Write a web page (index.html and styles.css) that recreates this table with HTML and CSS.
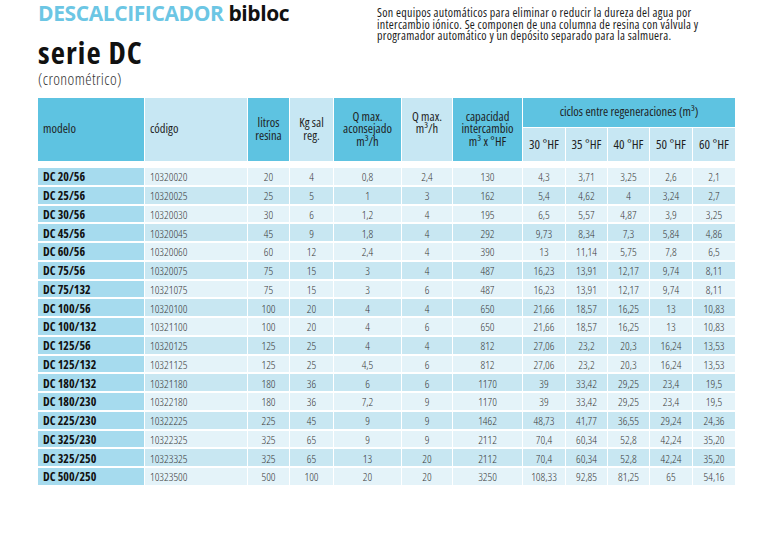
FILE: index.html
```html
<!DOCTYPE html>
<html lang="es">
<head>
<meta charset="utf-8">
<title>Descalcificador bibloc serie DC</title>
<link rel="stylesheet" href="styles.css">
</head>
<body>
<div class="page">
  <header class="top">
    <div class="titles">
      <h1 class="title"><span class="brand">DESCALCIFICADOR</span> bibloc</h1>
      <h2 class="serie">serie DC</h2>
      <p class="crono">(cronométrico)</p>
    </div>
    <p class="intro">Son equipos automáticos para eliminar o reducir la dureza del agua por intercambio iónico. Se componen de una columna de resina con válvula y programador automático y un depósito separado para la salmuera.</p>
  </header>

  <table class="specs">
    <colgroup>
      <col class="w-modelo"><col class="w-codigo"><col class="w-litros"><col class="w-kg"><col class="w-qac"><col class="w-q"><col class="w-cap">
      <col class="w-hf1"><col class="w-hf2"><col class="w-hf2"><col class="w-hf1"><col class="w-hf2">
    </colgroup>
    <thead>
      <tr class="h1">
        <th rowspan="2" class="dark left">modelo</th>
        <th rowspan="2" class="light left">código</th>
        <th rowspan="2" class="dark">litros<br>resina</th>
        <th rowspan="2" class="light">Kg sal<br>reg.</th>
        <th rowspan="2" class="dark">Q max.<br>aconsejado<br>m³/h</th>
        <th rowspan="2" class="light qmax">Q max.<br>m³/h</th>
        <th rowspan="2" class="dark">capacidad<br>intercambio<br>m³ x °HF</th>
        <th colspan="5" class="dark ciclos">ciclos entre regeneraciones (m³)</th>
      </tr>
      <tr class="h2">
        <th class="light hf">30 °HF</th>
        <th class="light hf">35 °HF</th>
        <th class="light hf">40 °HF</th>
        <th class="light hf">50 °HF</th>
        <th class="light hf">60 °HF</th>
      </tr>
    </thead>
    <tbody>
      <tr><td>DC 20/56</td><td>10320020</td><td>20</td><td>4</td><td>0,8</td><td>2,4</td><td>130</td><td>4,3</td><td>3,71</td><td>3,25</td><td>2,6</td><td>2,1</td></tr>
      <tr><td>DC 25/56</td><td>10320025</td><td>25</td><td>5</td><td>1</td><td>3</td><td>162</td><td>5,4</td><td>4,62</td><td>4</td><td>3,24</td><td>2,7</td></tr>
      <tr><td>DC 30/56</td><td>10320030</td><td>30</td><td>6</td><td>1,2</td><td>4</td><td>195</td><td>6,5</td><td>5,57</td><td>4,87</td><td>3,9</td><td>3,25</td></tr>
      <tr><td>DC 45/56</td><td>10320045</td><td>45</td><td>9</td><td>1,8</td><td>4</td><td>292</td><td>9,73</td><td>8,34</td><td>7,3</td><td>5,84</td><td>4,86</td></tr>
      <tr><td>DC 60/56</td><td>10320060</td><td>60</td><td>12</td><td>2,4</td><td>4</td><td>390</td><td>13</td><td>11,14</td><td>5,75</td><td>7,8</td><td>6,5</td></tr>
      <tr><td>DC 75/56</td><td>10320075</td><td>75</td><td>15</td><td>3</td><td>4</td><td>487</td><td>16,23</td><td>13,91</td><td>12,17</td><td>9,74</td><td>8,11</td></tr>
      <tr><td>DC 75/132</td><td>10321075</td><td>75</td><td>15</td><td>3</td><td>6</td><td>487</td><td>16,23</td><td>13,91</td><td>12,17</td><td>9,74</td><td>8,11</td></tr>
      <tr><td>DC 100/56</td><td>10320100</td><td>100</td><td>20</td><td>4</td><td>4</td><td>650</td><td>21,66</td><td>18,57</td><td>16,25</td><td>13</td><td>10,83</td></tr>
      <tr><td>DC 100/132</td><td>10321100</td><td>100</td><td>20</td><td>4</td><td>6</td><td>650</td><td>21,66</td><td>18,57</td><td>16,25</td><td>13</td><td>10,83</td></tr>
      <tr><td>DC 125/56</td><td>10320125</td><td>125</td><td>25</td><td>4</td><td>4</td><td>812</td><td>27,06</td><td>23,2</td><td>20,3</td><td>16,24</td><td>13,53</td></tr>
      <tr><td>DC 125/132</td><td>10321125</td><td>125</td><td>25</td><td>4,5</td><td>6</td><td>812</td><td>27,06</td><td>23,2</td><td>20,3</td><td>16,24</td><td>13,53</td></tr>
      <tr><td>DC 180/132</td><td>10321180</td><td>180</td><td>36</td><td>6</td><td>6</td><td>1170</td><td>39</td><td>33,42</td><td>29,25</td><td>23,4</td><td>19,5</td></tr>
      <tr><td>DC 180/230</td><td>10322180</td><td>180</td><td>36</td><td>7,2</td><td>9</td><td>1170</td><td>39</td><td>33,42</td><td>29,25</td><td>23,4</td><td>19,5</td></tr>
      <tr><td>DC 225/230</td><td>10322225</td><td>225</td><td>45</td><td>9</td><td>9</td><td>1462</td><td>48,73</td><td>41,77</td><td>36,55</td><td>29,24</td><td>24,36</td></tr>
      <tr><td>DC 325/230</td><td>10322325</td><td>325</td><td>65</td><td>9</td><td>9</td><td>2112</td><td>70,4</td><td>60,34</td><td>52,8</td><td>42,24</td><td>35,20</td></tr>
      <tr><td>DC 325/250</td><td>10323325</td><td>325</td><td>65</td><td>13</td><td>20</td><td>2112</td><td>70,4</td><td>60,34</td><td>52,8</td><td>42,24</td><td>35,20</td></tr>
      <tr><td>DC 500/250</td><td>10323500</td><td>500</td><td>100</td><td>20</td><td>20</td><td>3250</td><td>108,33</td><td>92,85</td><td>81,25</td><td>65</td><td>54,16</td></tr>
    </tbody>
  </table>
</div>
</body>
</html>
```
FILE: styles.css
```css
html, body {
  margin: 0;
  padding: 0;
  background: #ffffff;
}

body {
  font-family: "Open Sans", "DejaVu Sans Condensed", "Liberation Sans", sans-serif;
  font-stretch: 75%;
  color: #1a1a1a;
}

.page {
  padding: 0 0 0 38px;
}

.top {
  display: flex;
  height: 98px;
}

.titles {
  width: 339px;
  flex: none;
}

.title {
  margin: 1px 0 0 0;
  font-size: 21px;
  line-height: 24px;
  font-weight: bold;
  font-stretch: 100%;
  letter-spacing: -0.4px;
  color: #111111;
}

.title .brand {
  color: #6cc6e4;
}

.serie {
  margin: 10px 0 0 0;
  font-size: 31px;
  line-height: 34px;
  font-weight: bold;
  font-stretch: 87.5%;
  letter-spacing: 1.1px;
  color: #111111;
}

.crono {
  margin: 2px 0 0 0;
  font-size: 16px;
  line-height: 17px;
  font-weight: 300;
  letter-spacing: 0.4px;
  color: #333333;
}

.intro {
  margin: 7px 0 0 0;
  width: 336px;
  font-size: 12px;
  line-height: 11.5px;
  letter-spacing: 0.28px;
  color: #1c1c1c;
}

/* table */
.specs {
  border-collapse: separate;
  border-spacing: 0;
  table-layout: fixed;
  width: 697px;
}

.w-modelo { width: 107px; }
.w-codigo { width: 103px; }
.w-litros { width: 42px; }
.w-kg { width: 44px; }
.w-qac { width: 68px; }
.w-q { width: 51px; }
.w-cap { width: 70px; }
.w-hf1 { width: 43px; }
.w-hf2 { width: 42px; }

.specs th {
  padding: 0;
  font-weight: normal;
  font-size: 12.5px;
  line-height: 12.5px;
  color: #1f1f1f;
  text-align: center;
  vertical-align: middle;
  white-space: nowrap;
  border-right: 1px solid #ffffff;
  border-bottom: 1px solid #ffffff;
}

.specs th:last-child,
.specs td:last-child {
  border-right: none;
}

.specs th.left {
  text-align: left;
  padding-left: 5px;
}

.specs th.qmax {
  padding-bottom: 12.5px;
}

.specs th.dark {
  background: #5ec3e1;
}

.specs th.light {
  background: #c7e7f3;
}

.specs .h1 {
  height: 30px;
}

.specs .h2 {
  height: 34px;
}

.specs th.hf {
  font-size: 13px;
  font-weight: 500;
}

.specs tbody tr {
  height: 18.75px;
}

.specs tbody tr:first-child {
  height: 22.75px;
}

.specs tbody tr:first-child td {
  border-top-width: 6px;
}

.specs td {
  padding: 2px 0 0 0;
  font-size: 11.5px;
  line-height: 12px;
  font-weight: 300;
  text-align: center;
  vertical-align: middle;
  white-space: nowrap;
  color: #3a3a3a;
  border-top: 2px solid #ffffff;
  border-right: 1px solid #ffffff;
  background: #e4f3f9;
}

.specs tbody tr:nth-child(even) td {
  background: #c8e7f2;
}

.specs td:first-child,
.specs tbody tr:nth-child(even) td:first-child {
  text-align: left;
  padding-left: 5px;
  font-weight: bold;
  font-size: 12px;
  color: #111111;
  background: #a6dbee;
}

.specs td:nth-child(2) {
  text-align: left;
  padding-left: 5px;
}
```
